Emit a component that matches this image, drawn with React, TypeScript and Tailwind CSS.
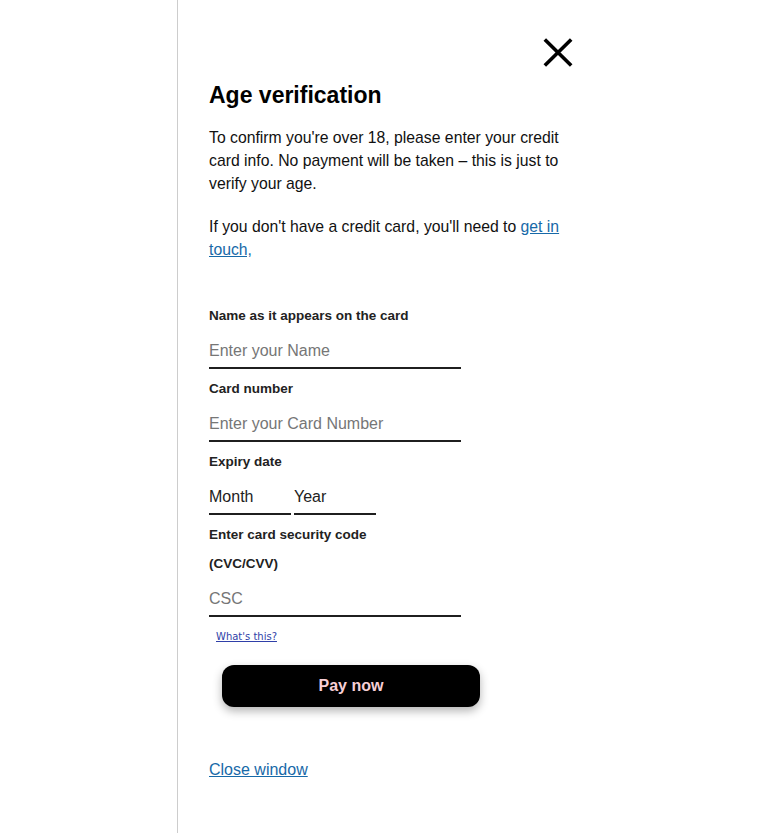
const font = { fontFamily: '"Liberation Sans", Arial, sans-serif' };

function Field({ placeholder }: { placeholder: string }) {
  return (
    <input
      type="text"
      placeholder={placeholder}
      className="w-[252px] mt-[7px] h-[36px] pt-[1px] border-b-2 border-[#1f1f1f] bg-transparent text-[16px] text-[#222] placeholder:text-[#767676] outline-none"
    />
  );
}

function Label({ children }: { children: React.ReactNode }) {
  return <p className="text-[13.5px] leading-[20px] font-bold text-[#222] mt-[10px]">{children}</p>;
}

export default function App() {
  return (
    <div className="min-h-screen bg-white flex" style={font}>
      <div className="w-[177px] flex-shrink-0" />
      <div className="flex-1 border-l border-[#cdcdcd] pl-[31px] pt-[38px] min-h-[833px]">
        <div className="w-[364px] flex flex-col">
          {/* Close */}
          <button className="self-end text-black">
            <svg width="30" height="29" viewBox="0 0 30 29" fill="none" stroke="currentColor" strokeWidth="3.6">
              <path d="M1.8 1.5 L28.2 27.5 M28.2 1.5 L1.8 27.5" />
            </svg>
          </button>

          <h2 className="mt-[14px] text-[23px] leading-[28px] font-bold text-black">Age verification</h2>

          <p className="mt-[17px] text-[15.75px] leading-[23px] text-[#111]">
            To confirm you're over 18, please enter your credit card info. No payment will be taken – this is just to
            verify your age.
          </p>

          <p className="mt-[20px] text-[15.75px] leading-[23px] text-[#111]">
            If you don't have a credit card, you'll need to{' '}
            <a href="#" className="text-[#1769a8] underline">
              get in touch,
            </a>
          </p>

          {/* Form */}
          <form className="flex flex-col mt-[35px]" onSubmit={(e) => e.preventDefault()}>
            <Label>Name as it appears on the card</Label>
            <Field placeholder="Enter your Name" />

            <Label>Card number</Label>
            <Field placeholder="Enter your Card Number" />

            <Label>Expiry date</Label>
            <div className="flex gap-[3px]">
              <select className="w-[82px] mt-[7px] h-[36px] pt-[1px] border-b-2 border-[#1f1f1f] bg-transparent text-[16px] text-[#222] outline-none appearance-none">
                <option>Month</option>
              </select>
              <select className="w-[82px] mt-[7px] h-[36px] pt-[1px] border-b-2 border-[#1f1f1f] bg-transparent text-[16px] text-[#222] outline-none appearance-none">
                <option>Year</option>
              </select>
            </div>

            <p className="text-[13.5px] leading-[20px] font-bold text-[#222] mt-[10px]">Enter card security code</p>
            <p className="text-[13.5px] leading-[20px] font-bold text-[#222] mt-[9px]">(CVC/CVV)</p>
            <Field placeholder="CSC" />

            <a
              href="#"
              className="mt-[13px] ml-[7px] text-[10px] leading-[14px] text-[#2f3fa8] underline self-start"
              style={{ fontFamily: '"DejaVu Sans", Verdana, sans-serif' }}
            >
              What's this?
            </a>

            <button
              type="submit"
              className="mt-[21px] ml-[13px] w-[258px] h-[42px] rounded-[12px] bg-black text-[#f7cfd6] text-[16px] font-bold shadow-[0_4px_10px_rgba(0,0,0,0.3)]"
            >
              Pay now
            </button>
          </form>

          <a href="#" className="mt-[53px] self-start text-[16px] leading-[20px] text-[#1769a8] underline">
            Close window
          </a>
        </div>
      </div>
    </div>
  );
}
